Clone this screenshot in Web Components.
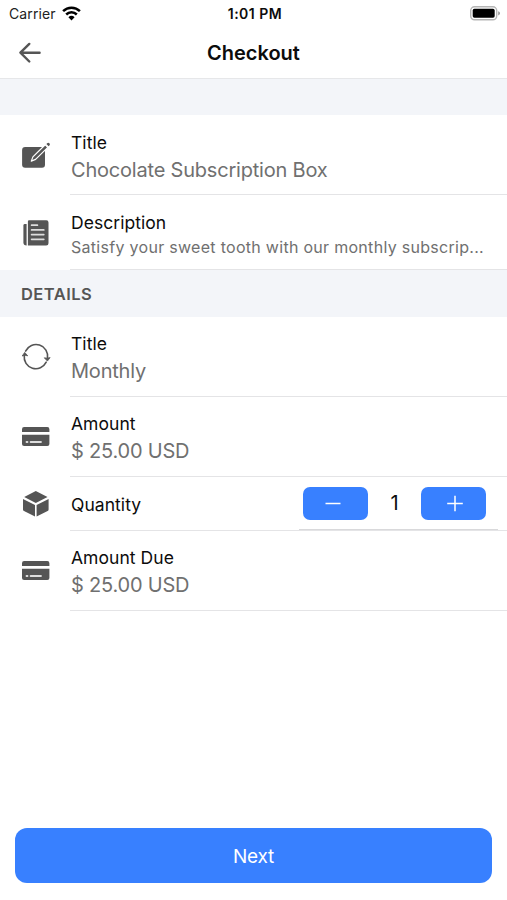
<!DOCTYPE html>
<html lang="en">
<head>
<meta charset="utf-8">
<title>Checkout</title>
<style>
html,body{margin:0;height:100%;background:#fff;overflow:hidden}
body{font-family:Inter,"Liberation Sans",sans-serif;color:#0c0c0c}
</style>
</head>
<body>
<checkout-page></checkout-page>
<script>
const ICONS = {
  back: '<path d="M11.3 5.2 2.4 14l8.9 8.8M3 14h18.6" transform="translate(-2 -.3)" fill="none" stroke="#555" stroke-width="2.4" stroke-linecap="round" stroke-linejoin="round"/>',
  edit: '<rect x="1.1" y="6" width="22.9" height="20.7" rx="3"/><path d="M24.2 3.8 11.9 15.9 10.3 20.1 14.6 18.4 26.8 6.4z" fill="#555" stroke="#fff" stroke-width="1.2" stroke-linejoin="round"/><path d="m25.4 3 .8-.8a1.5 1.5 0 0 1 2.2 2.2l-.8.8z"/>',
  news: '<path d="M8 1.3h17.4a2.1 2.1 0 0 1 2.1 2.1v20.8a2.3 2.3 0 0 1-2.3 2.3H6.9V2.4A1.1 1.1 0 0 1 8 1.3z"/><path d="M5.6 5v21.5A3.2 3.2 0 0 1 2.4 23.3V6.4A1.4 1.4 0 0 1 3.8 5z"/><g stroke="#ddd" stroke-width="1.7" stroke-linecap="round"><path d="M10.6 6.2h5.8M10.6 10.9h12.2M10.6 15.6h12.2M10.6 20.3h12.2"/></g>',
  sync: '<g fill="none" stroke="#555" stroke-width="1.6" stroke-linecap="round"><path d="M4.6 8.1A11.6 11.6 0 0 1 26.5 15M3.3 12.5A11.6 11.6 0 0 0 25.2 19.2"/></g><path d="m1.2 13 2.5-3.6 3 3.4-2.8-.5zM23.3 14.8l3 .4 2.8-.6-2.7 3.5z" stroke="#555" stroke-width=".8" stroke-linejoin="round"/>',
  card: '<path d="M1 9V6.2a2.1 2.1 0 0 1 2.1-2.1h23.2a2.1 2.1 0 0 1 2.1 2.1V9zM1 11.8h27.4v9.2a2.1 2.1 0 0 1-2.1 2.1H3.1A2.1 2.1 0 0 1 1 21z"/><path d="M5.5 19h1M9.6 19H20" stroke="#ddd" stroke-width="1.8" stroke-linecap="round"/>',
  cube: '<path d="M14.8 1.1 26.5 7.1 14.8 13.1 3.2 7.1zM2 8.9l12 6.1v11.5L3 21.1a1.9 1.9 0 0 1-1-1.7zM27.6 8.9v10.5a1.9 1.9 0 0 1-1 1.7l-11 5.4V15z"/>'
};
const define = (name, template) => customElements.define(name, class extends HTMLElement {
  connectedCallback() {
    if (this.shadowRoot) return;
    this.attachShadow({mode: 'open'}).innerHTML = template(this);
  }
});

define('app-icon', el => `<style>:host{display:block;width:30px;height:28px}svg{display:block;overflow:visible}</style>
<svg width="30" height="28" viewBox="0 0 30 28" fill="#555">${ICONS[el.getAttribute('name')]}</svg>`);

define('status-bar', () => `<style>
:host{display:grid;grid-template-columns:1fr auto 1fr;height:27px;align-items:center;font-size:14px;padding:0 7px 0 9px}
.l{display:flex;align-items:center;gap:6px;color:#222}.l span{letter-spacing:.1px}.t{font-weight:600;font-size:14px;letter-spacing:.5px;margin-right:-1px}
.r{justify-self:end}svg{display:block}.l svg{margin-top:-1px}
</style><div class="l"><span>Carrier</span><svg width="19" height="15" viewBox="0 0 19 15"><g fill="none" stroke="#000" stroke-width="2.5"><path d="M1.1 5.2a12 12 0 0 1 16.8 0M4.2 8.5a7.5 7.5 0 0 1 10.6 0"/></g><path d="m6.4 11.2 3.1 3.2 3.1-3.2a4.5 4.5 0 0 0-6.2 0z"/></svg></div>
<span class="t">1:01 PM</span>
<svg class="r" width="31" height="15" viewBox="0 0 31 15"><rect x="1.7" y=".8" width="26" height="13" rx="3.8" fill="#fff" stroke="#b5b5b5" stroke-width="1.4"/><rect x="3.7" y="2.8" width="22" height="9" rx="1.7"/><path d="M29.2 5.2q1.8.7 1.8 2.1t-1.8 2.1z" fill="#999"/></svg>`);

define('nav-bar', () => `<style>
:host{display:grid;grid-template-columns:1fr auto 1fr;align-items:center;height:51px;border-bottom:1px solid #e6e7e9;padding:0 20px}
h1{margin:0;font-size:20px;font-weight:600;line-height:24px;letter-spacing:0}
</style><app-icon name="back"></app-icon><h1><slot></slot></h1>`);

define('section-head', () => `<style>
:host{display:flex;align-items:center;box-sizing:border-box;height:var(--h,47px);background:#f3f5f9;padding-left:21px;color:#555;font-weight:600;font-size:16.5px;letter-spacing:.45px}
</style><slot></slot>`);

define('list-row', el => `<style>
:host{display:grid;grid-template-columns:49px 1fr;height:var(--h,80px);padding-left:21px;align-items:center}
.b{height:100%;box-sizing:border-box;border-bottom:1px solid #e4e4e6;display:flex;align-items:center;padding:0 9px 0 1px;justify-content:space-between}
.x{display:flex;flex-direction:column;gap:3px;white-space:nowrap;padding-top:var(--t,3px)}
.n{font-size:17.5px;line-height:24px;letter-spacing:.05px}.v{font-size:20px;line-height:25px;color:#707070;letter-spacing:-.2px}
:host([small]) .x{padding-top:5px;gap:1px}
:host([small]) .v{font-size:16px;line-height:22px;letter-spacing:.29px}
</style><app-icon name="${el.getAttribute('icon')}"></app-icon>
<div class="b"><div class="x"><div class="n"><slot></slot></div>${el.querySelector('[slot=value]') ? '<div class="v"><slot name="value"></slot></div>' : ''}</div><slot name="end"></slot></div>`);

define('qty-stepper', () => `<style>
:host{display:grid;grid-template-columns:65px 53px 65px;align-items:center;justify-items:center;height:53px;box-sizing:border-box;border-bottom:1px solid #d9d9db;padding:0 12px 0 4px;font-size:20px}
button{width:65px;height:33px;border:0;border-radius:7px;background:#3880ff;padding:0;display:grid;place-items:center}
button:first-of-type svg{margin-left:-5px}button:last-of-type svg{margin-left:3px}
</style><button><svg width="18" height="18"><path d="M1.5 9.5h15" stroke="#fff" stroke-width="1.5"/></svg></button><span>1</span><button><svg width="18" height="18"><path d="M1.2 9.5h15.6M9 1.7v15.6" stroke="#fff" stroke-width="1.5"/></svg></button>`);

define('primary-button', () => `<style>
:host{display:block;margin:0 15px 17px}
button{display:block;width:100%;height:55px;border:0;border-radius:12px;background:#3880ff;color:#fff;font:400 19px Inter,sans-serif;letter-spacing:-.2px;padding:2px 0 0}
</style><button><slot></slot></button>`);

define('checkout-page', () => `<style>
:host{display:flex;flex-direction:column;width:507px;height:900px}main{flex:1}
</style><status-bar></status-bar><nav-bar>Checkout</nav-bar>
<main><section-head style="--h:36px"></section-head>
<list-row icon="edit" style="--t:5px"><span>Title</span><span slot="value">Chocolate Subscription Box</span></list-row>
<list-row icon="news" small style="--h:75px"><span>Description</span><span slot="value">Satisfy your sweet tooth with our monthly subscrip...</span></list-row>
<section-head>DETAILS</section-head>
<list-row icon="sync"><span>Title</span><span slot="value">Monthly</span></list-row>
<list-row icon="card"><span>Amount</span><span slot="value">$ 25.00 USD</span></list-row>
<list-row icon="cube" style="--h:54px"><span>Quantity</span><qty-stepper slot="end"></qty-stepper></list-row>
<list-row icon="card"><span>Amount Due</span><span slot="value">$ 25.00 USD</span></list-row></main>
<primary-button>Next</primary-button>`);
</script>
</body>
</html>
